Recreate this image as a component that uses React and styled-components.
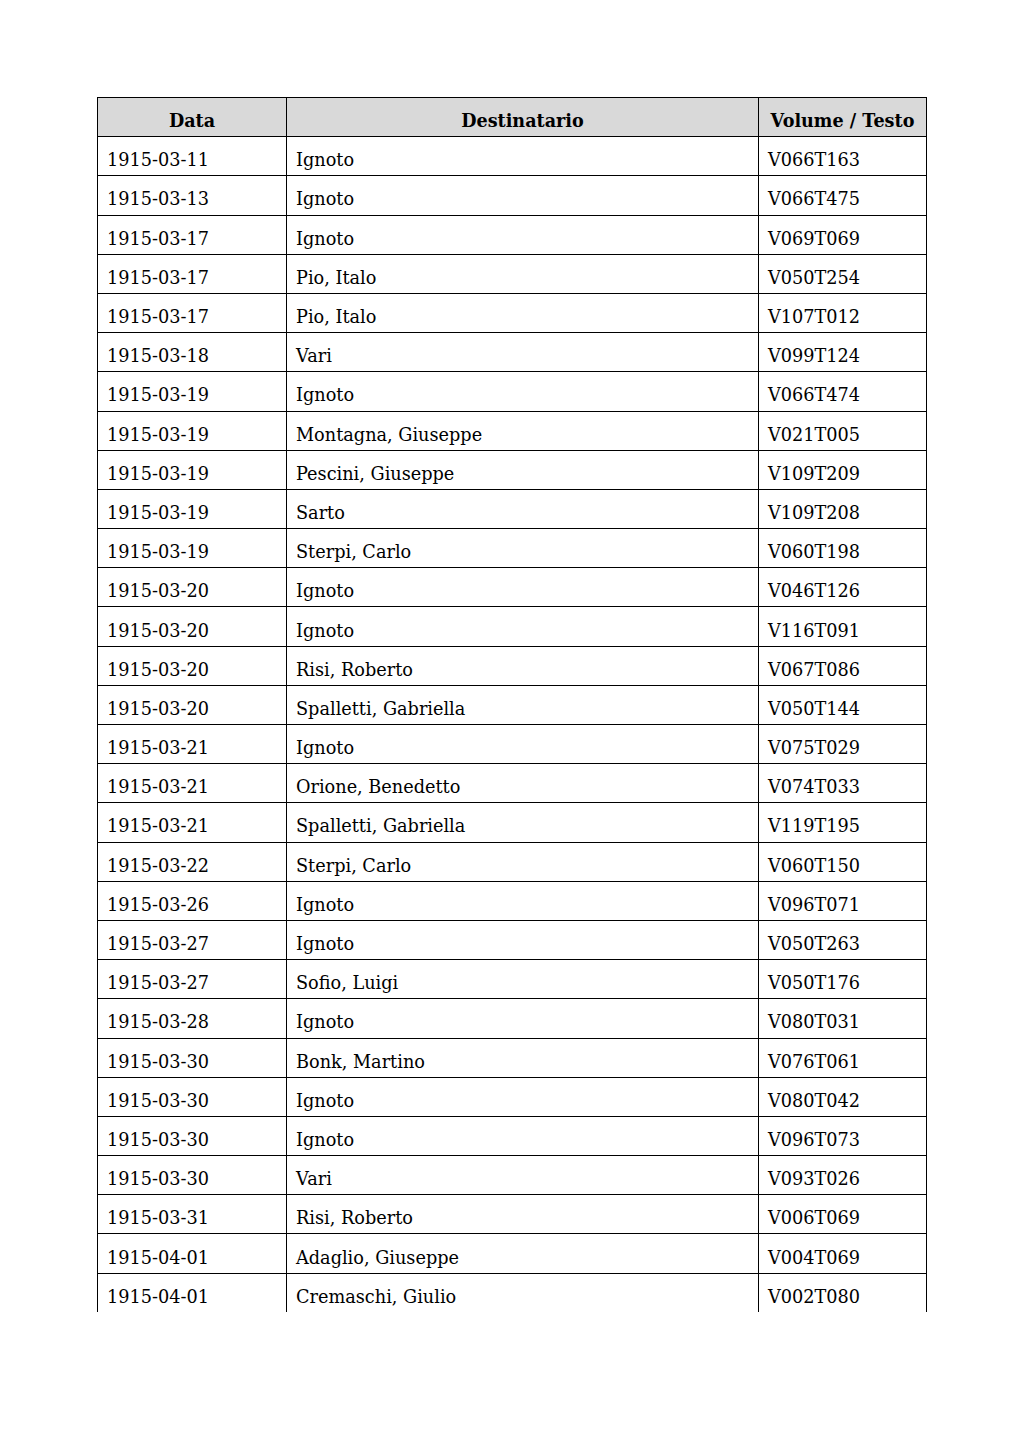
import React from "react";
import styled, { createGlobalStyle } from "styled-components";

const GlobalStyle = createGlobalStyle`
  html, body {
    margin: 0;
    padding: 0;
    background: #ffffff;
  }
  body {
    font-family: "DejaVu Serif", "Liberation Serif", serif;
    color: #000;
  }
`;

const Page = styled.div`
  width: 1024px;
  height: 1449px;
  padding: 97px 0 0 97px;
  box-sizing: border-box;
  overflow: hidden;
`;

const Table = styled.table`
  border-collapse: collapse;
  table-layout: fixed;
  width: 829px;
`;

const HeadCell = styled.th`
  background: #d9d9d9;
  border: 1px solid #000;
  height: 39.2px;
  padding: 6px 6px 0;
  box-sizing: border-box;
  font-size: 17.6px;
  font-weight: bold;
  text-align: center;
  vertical-align: middle;
  white-space: nowrap;
`;

const Cell = styled.td`
  border: 1px solid #000;
  height: 39.2px;
  padding: 8px 9px 0;
  box-sizing: border-box;
  font-size: 17.7px;
  text-align: left;
  vertical-align: middle;
  white-space: nowrap;
`;

const Row = styled.tr`
  &:last-child td {
    border-bottom: none;
  }
`;

const rows = [
  ["1915-03-11", "Ignoto", "V066T163"],
  ["1915-03-13", "Ignoto", "V066T475"],
  ["1915-03-17", "Ignoto", "V069T069"],
  ["1915-03-17", "Pio, Italo", "V050T254"],
  ["1915-03-17", "Pio, Italo", "V107T012"],
  ["1915-03-18", "Vari", "V099T124"],
  ["1915-03-19", "Ignoto", "V066T474"],
  ["1915-03-19", "Montagna, Giuseppe", "V021T005"],
  ["1915-03-19", "Pescini, Giuseppe", "V109T209"],
  ["1915-03-19", "Sarto", "V109T208"],
  ["1915-03-19", "Sterpi, Carlo", "V060T198"],
  ["1915-03-20", "Ignoto", "V046T126"],
  ["1915-03-20", "Ignoto", "V116T091"],
  ["1915-03-20", "Risi, Roberto", "V067T086"],
  ["1915-03-20", "Spalletti, Gabriella", "V050T144"],
  ["1915-03-21", "Ignoto", "V075T029"],
  ["1915-03-21", "Orione, Benedetto", "V074T033"],
  ["1915-03-21", "Spalletti, Gabriella", "V119T195"],
  ["1915-03-22", "Sterpi, Carlo", "V060T150"],
  ["1915-03-26", "Ignoto", "V096T071"],
  ["1915-03-27", "Ignoto", "V050T263"],
  ["1915-03-27", "Sofio, Luigi", "V050T176"],
  ["1915-03-28", "Ignoto", "V080T031"],
  ["1915-03-30", "Bonk, Martino", "V076T061"],
  ["1915-03-30", "Ignoto", "V080T042"],
  ["1915-03-30", "Ignoto", "V096T073"],
  ["1915-03-30", "Vari", "V093T026"],
  ["1915-03-31", "Risi, Roberto", "V006T069"],
  ["1915-04-01", "Adaglio, Giuseppe", "V004T069"],
  ["1915-04-01", "Cremaschi, Giulio", "V002T080"],
];

export default function App() {
  return (
    <>
      <GlobalStyle />
      <Page>
        <Table>
          <colgroup>
            <col style={{ width: "189px" }} />
            <col style={{ width: "472px" }} />
            <col style={{ width: "168px" }} />
          </colgroup>
          <thead>
            <tr>
              <HeadCell>Data</HeadCell>
              <HeadCell>Destinatario</HeadCell>
              <HeadCell>Volume / Testo</HeadCell>
            </tr>
          </thead>
          <tbody>
            {rows.map(([date, name, vol], i) => (
              <Row key={i}>
                <Cell>{date}</Cell>
                <Cell>{name}</Cell>
                <Cell>{vol}</Cell>
              </Row>
            ))}
          </tbody>
        </Table>
      </Page>
    </>
  );
}
